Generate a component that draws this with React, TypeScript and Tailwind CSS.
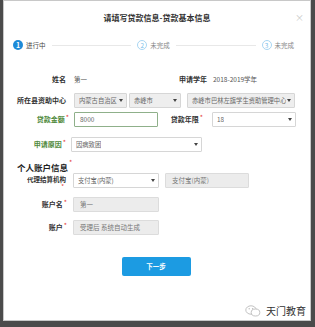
import React from "react";

const font = { fontFamily: '"Noto Sans CJK SC", "Noto Sans", sans-serif' };

function Arrow() {
  return (
    <svg width="4" height="3" viewBox="0 0 4 3" className="shrink-0 ml-[1px]">
      <path d="M0 0 L4 0 L2 3 Z" fill="#444" />
    </svg>
  );
}

function Star() {
  return <span className="text-[#e53935] text-[7px] leading-none self-start ml-[1px] -mt-[2px]">*</span>;
}

function Select({ w, text, gray }: { w: string; text: string; gray?: boolean }) {
  return (
    <div
      className={`${w} h-[15px] flex items-center justify-between pl-[4px] pr-[3px] border border-[#d6d6d6] rounded-[1px] ${
        gray ? "bg-[#eeeeee]" : "bg-white"
      }`}
    >
      <span className="text-[6.3px] text-[#666] whitespace-nowrap overflow-hidden leading-[9px] min-w-0">{text}</span>
      <Arrow />
    </div>
  );
}

function GrayBox({ w, text }: { w: string; text: string }) {
  return (
    <div className={`${w} h-[15px] flex items-center px-[6px] border border-[#dcdcdc] bg-[#ececec] rounded-[1px]`}>
      <span className="text-[6.5px] text-[#777] whitespace-nowrap leading-none">{text}</span>
    </div>
  );
}

export default function App() {
  return (
    <div className="w-[315px] h-[327px] bg-[#4b4b4b] pl-[3px] pr-[4px] pb-[6px]" style={font}>
      <div className="w-full h-full bg-white border border-[#c8c8c8] flex flex-col">
        {/* header */}
        <div className="h-[33px] flex items-center">
          <div className="w-[20px]" />
          <div className="flex-1 text-center text-[8px] font-semibold text-[#333] leading-none pt-[1px]">
            请填写贷款信息-贷款基本信息
          </div>
          <div className="w-[20px] text-[9px] text-[#c8c8c8] leading-none pr-[6px] text-right">×</div>
        </div>
        {/* steps */}
        <div className="h-[22px] flex items-center pl-[9px] pr-[16px]">
          <div className="w-[10px] h-[10px] rounded-full bg-[#1d8ad8] flex items-center justify-center text-white text-[7px] font-bold leading-none">
            1
          </div>
          <span className="ml-[3px] text-[6.5px] text-[#444] leading-none">进行中</span>
          <div className="flex-1 h-px bg-[#e8e8e8] mx-[6px]" />
          <div className="w-[10px] h-[10px] rounded-full border border-[#a8d6f3] flex items-center justify-center text-[#7cc0ea] text-[6.5px] leading-none">
            2
          </div>
          <span className="ml-[3px] text-[6.5px] text-[#888] leading-none">未完成</span>
          <div className="flex-1 h-px bg-[#e8e8e8] mx-[6px]" />
          <div className="w-[10px] h-[10px] rounded-full border border-[#a8d6f3] flex items-center justify-center text-[#7cc0ea] text-[6.5px] leading-none">
            3
          </div>
          <span className="ml-[3px] text-[6.5px] text-[#888] leading-none">未完成</span>
        </div>

        {/* row 姓名 */}
        <div className="mt-[15px] h-[16px] flex items-center">
          <div className="w-[62px] text-right text-[7px] font-bold text-[#333] leading-none">姓名</div>
          <div className="ml-[8px] w-[110px] text-[6.5px] text-[#555] leading-none">第一</div>
          <div className="w-[23px] text-right text-[7px] font-bold text-[#333] leading-none whitespace-nowrap flex justify-end">
            申请学年
          </div>
          <div className="ml-[6px] text-[6.5px] text-[#555] leading-none whitespace-nowrap">2018-2019学年</div>
        </div>

        {/* row 所在县资助中心 */}
        <div className="mt-[6px] h-[15px] flex items-center">
          <div className="w-[62px] text-right text-[7px] font-bold text-[#333] leading-none whitespace-nowrap flex justify-end">
            所在县资助中心
          </div>
          <div className="ml-[8px] flex items-center gap-[2px]">
            <Select w="w-[53px]" text="内蒙古自治区" gray />
            <Select w="w-[52px]" text="赤峰市" gray />
            <div className="w-[2px]" />
            <Select w="w-[108px]" text="赤峰市巴林左旗学生资助管理中心" gray />
          </div>
        </div>

        {/* row 贷款金额 */}
        <div className="mt-[4px] h-[15px] flex items-center">
          <div className="w-[65px] flex justify-end items-center">
            <span className="text-[7px] font-bold text-[#4f8a3c] leading-none">贷款金额</span>
            <Star />
          </div>
          <div className="ml-[5px] w-[84px] h-[15px] flex items-center px-[5px] border border-[#8fb08a] bg-white rounded-[1px]">
            <span className="text-[6.5px] text-[#666] leading-none">8000</span>
          </div>
          <div className="w-[45px] flex justify-end items-center">
            <span className="text-[7px] font-bold text-[#333] leading-none">贷款年限</span>
            <Star />
          </div>
          <div className="ml-[9px]">
            <Select w="w-[84px]" text="18" />
          </div>
        </div>

        {/* row 申请原因 */}
        <div className="mt-[10px] h-[15px] flex items-center">
          <div className="w-[62px] flex justify-end items-center">
            <span className="text-[7px] font-bold text-[#4f8a3c] leading-none">申请原因</span>
            <Star />
          </div>
          <div className="ml-[5px]">
            <Select w="w-[131px]" text="因病致困" />
          </div>
        </div>

        {/* section */}
        <div className="mt-[9px] h-[12px] flex items-center pl-[13px]">
          <span className="text-[8.5px] font-bold text-[#222] leading-none">个人账户信息</span>
          <Star />
        </div>

        {/* row 代理结算机构 */}
        <div className="h-[15px] flex items-center">
          <div className="w-[62px] flex flex-col items-end">
            <span className="text-[6.5px] font-bold text-[#333] leading-[7px] whitespace-nowrap mt-[4px]">代理结算机构</span>
            <span className="text-[#e53935] text-[6px] leading-[5px] mr-[2px] mt-[1px]">*</span>
          </div>
          <div className="ml-[7px]">
            <Select w="w-[86px]" text="支付宝(内蒙)" />
          </div>
          <div className="ml-[6px]">
            <GrayBox w="w-[84px]" text="支付宝(内蒙)" />
          </div>
        </div>

        {/* row 账户名 */}
        <div className="mt-[9px] h-[15px] flex items-center">
          <div className="w-[63px] flex justify-end items-center">
            <span className="text-[7px] font-bold text-[#333] leading-none">账户名</span>
            <Star />
          </div>
          <div className="ml-[6px]">
            <GrayBox w="w-[86px]" text="第一" />
          </div>
        </div>

        {/* row 账户 */}
        <div className="mt-[8px] h-[15px] flex items-center">
          <div className="w-[63px] flex justify-end items-center">
            <span className="text-[7px] font-bold text-[#333] leading-none">账户</span>
            <Star />
          </div>
          <div className="ml-[6px]">
            <GrayBox w="w-[86px]" text="受理后 系统自动生成" />
          </div>
        </div>

        {/* button */}
        <div className="mt-[22px] flex justify-center pr-[2px]">
          <div className="w-[69px] h-[19px] bg-[#1c9be2] rounded-[2px] flex items-center justify-center text-white text-[6.5px] font-bold leading-none">
            下一步
          </div>
        </div>

        {/* watermark */}
        <div className="mt-auto mb-[2px] h-[14px] flex items-center justify-end pr-[4px] gap-[5px]">
          <svg width="16" height="12" viewBox="0 0 16 12">
            <ellipse cx="6" cy="5" rx="5.2" ry="4.2" fill="none" stroke="#bbb" strokeWidth="0.9" />
            <ellipse cx="10.5" cy="7.5" rx="4.3" ry="3.5" fill="white" stroke="#bbb" strokeWidth="0.9" />
            <circle cx="4.2" cy="3.8" r="0.7" fill="#bbb" />
            <circle cx="7.6" cy="3.8" r="0.7" fill="#bbb" />
          </svg>
          <span className="text-[10px] text-[#333] leading-none">天门教育</span>
        </div>
      </div>
    </div>
  );
}
